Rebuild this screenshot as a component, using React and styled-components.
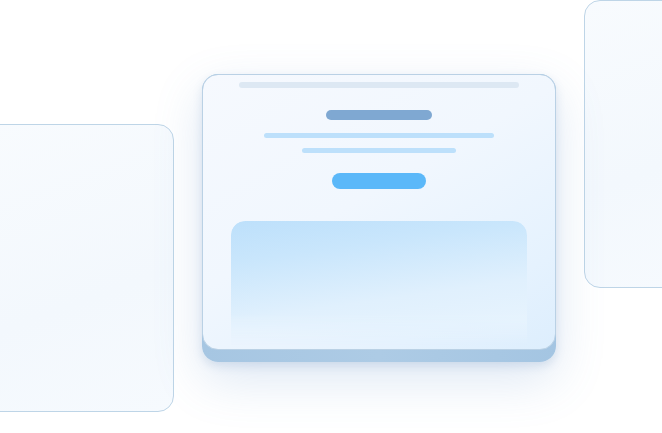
import React from "react";
import styled, { createGlobalStyle } from "styled-components";

const GlobalStyle = createGlobalStyle`
  html, body {
    margin: 0;
    padding: 0;
    background: #ffffff;
    font-family: "Inter", "Liberation Sans", sans-serif;
  }
`;

const Canvas = styled.div`
  position: relative;
  width: 662px;
  height: 433px;
  overflow: hidden;
  background: #ffffff;
`;

const SideCard = styled.div`
  position: absolute;
  left: ${(p) => p.$left}px;
  top: ${(p) => p.$top}px;
  width: ${(p) => p.$width}px;
  height: ${(p) => p.$height}px;
  box-sizing: border-box;
  border: 1px solid #bed5e7;
  border-radius: 16px;
  background: linear-gradient(160deg, #f8fbfe 0%, #f3f8fd 60%, #f6fafe 100%);
`;

const MainCard = styled.div`
  position: absolute;
  left: 202px;
  top: 74px;
  width: 354px;
  box-sizing: border-box;
  padding-bottom: 12px;
  border-radius: 16px;
  background: linear-gradient(90deg, #a6c6e2 0%, #adcbe5 50%, #a4c5e2 100%);
  box-shadow: 0 18px 50px rgba(90, 140, 200, 0.2), 0 4px 10px rgba(90, 130, 180, 0.18);
`;

const Face = styled.div`
  height: 276px;
  box-sizing: border-box;
  border: 1px solid #bad1e5;
  border-radius: 16px;
  background: linear-gradient(150deg, #f6f9fe 0%, #f1f7fe 45%, #e5f2fe 80%, #ddeefd 100%);
  display: flex;
  flex-direction: column;
  align-items: center;
  padding-top: 7px;
  overflow: hidden;
`;

const Bar = styled.div`
  width: ${(p) => p.$w}px;
  height: ${(p) => p.$h}px;
  margin-top: ${(p) => p.$mt}px;
  border-radius: 999px;
  background: ${(p) => p.$color};
  flex-shrink: 0;
`;

const Button = styled.div`
  width: 94px;
  height: 16px;
  margin-top: 20px;
  border-radius: 8px;
  background: #5bb8f9;
  flex-shrink: 0;
`;

const Preview = styled.div`
  width: 296px;
  height: 125px;
  margin-top: 32px;
  border-radius: 14px 14px 0 0;
  flex-shrink: 0;
  background: linear-gradient(172deg, #bde0fb 0%, #c9e6fc 25%, #e0f0fd 60%, #eaf5fe 100%);
  -webkit-mask-image: linear-gradient(to bottom, #000 75%, transparent 100%);
  mask-image: linear-gradient(to bottom, #000 75%, transparent 100%);
`;

export default function App() {
  return (
    <>
      <GlobalStyle />
      <Canvas>
        <SideCard $left={-20} $top={124} $width={194} $height={288} />
        <SideCard $left={584} $top={0} $width={100} $height={288} />
        <MainCard>
          <Face>
            <Bar $w={280} $h={6} $mt={0} $color="#dde8f3" />
            <Bar $w={106} $h={10} $mt={22} $color="#7fa8d2" />
            <Bar $w={230} $h={5} $mt={13} $color="#bde0fb" />
            <Bar $w={154} $h={5} $mt={10} $color="#bde0fb" />
            <Button />
            <Preview />
          </Face>
        </MainCard>
      </Canvas>
    </>
  );
}
